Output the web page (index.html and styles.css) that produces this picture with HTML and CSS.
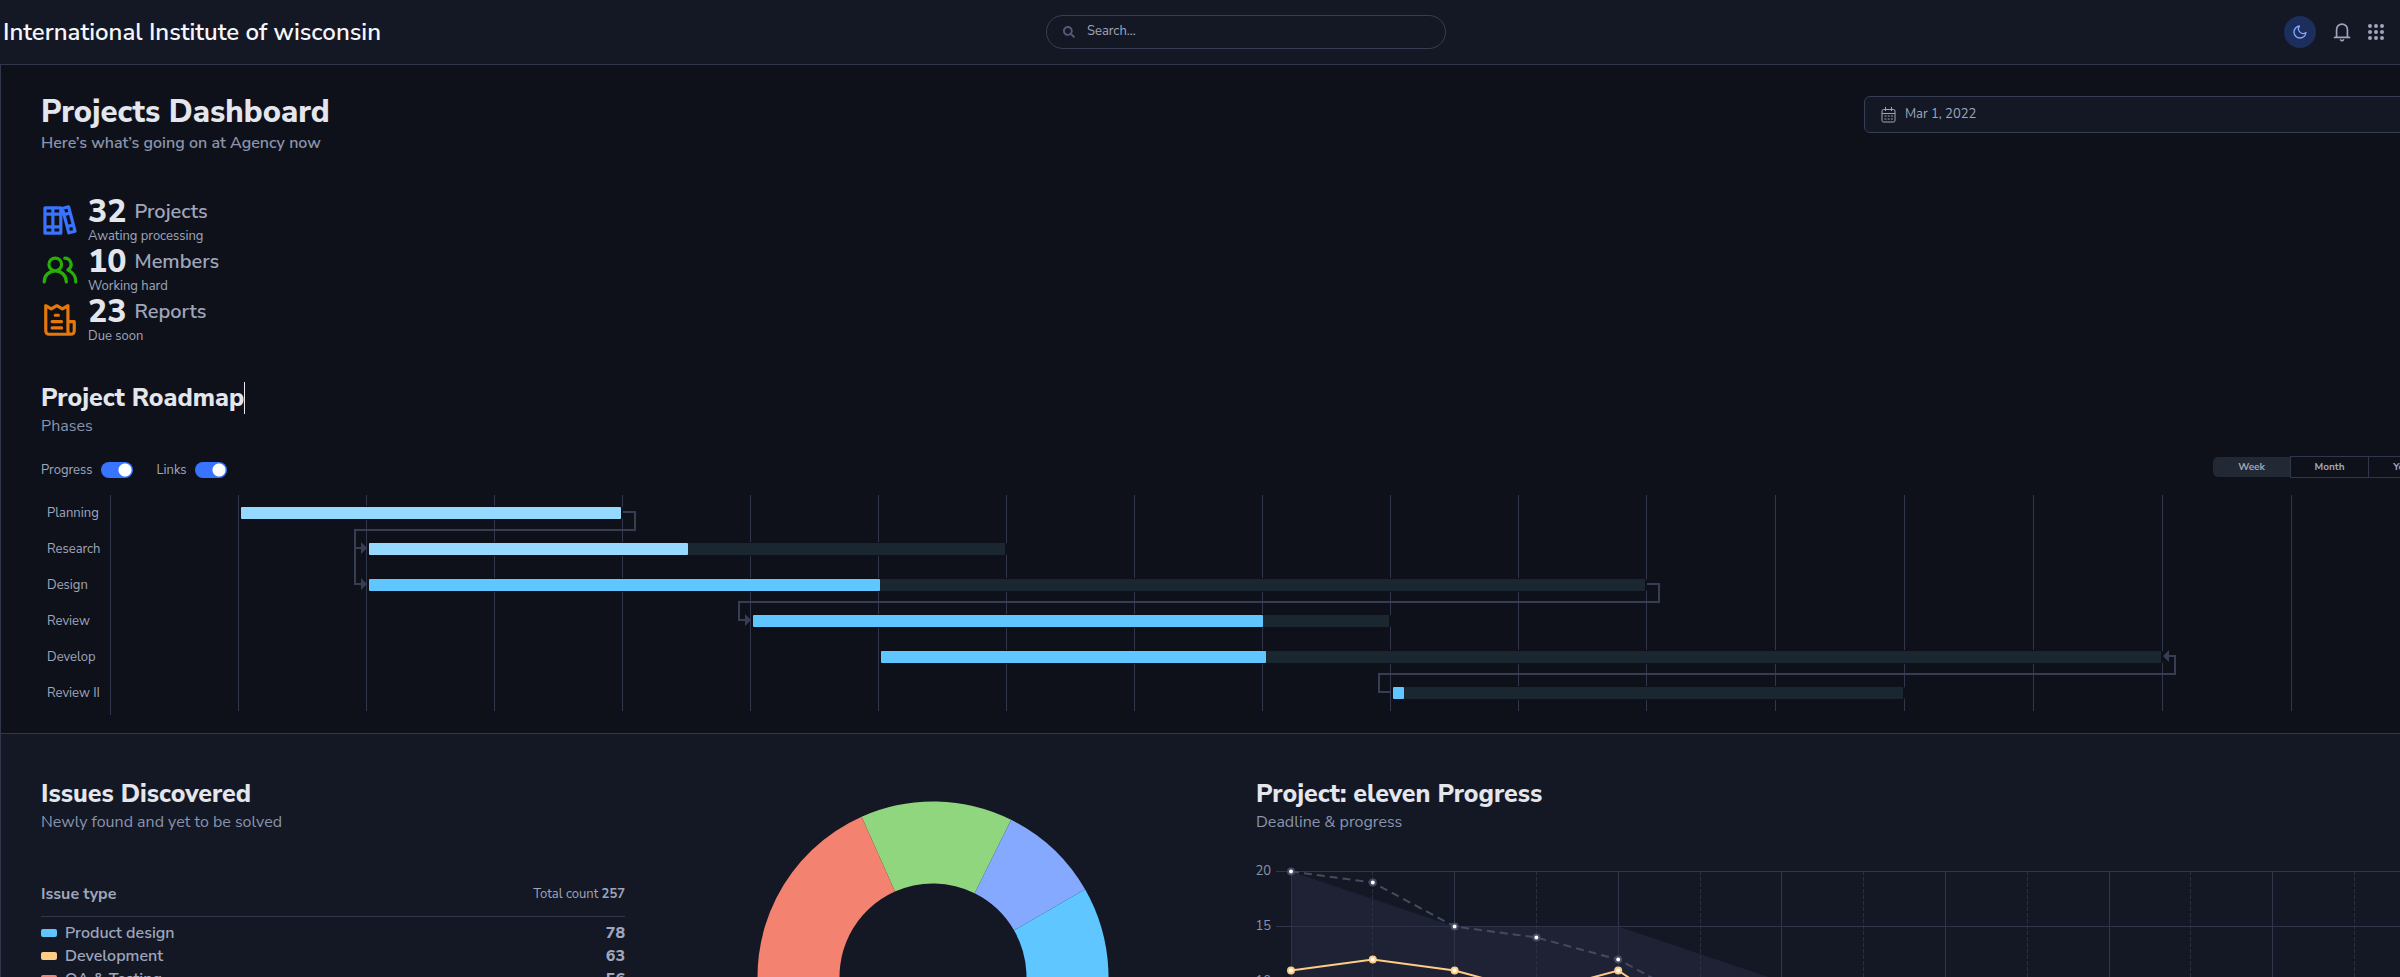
FILE: index.html
```
<!DOCTYPE html>
<html lang="en">
<head>
<meta charset="utf-8">
<title>Projects Dashboard</title>
<link rel="stylesheet" href="styles.css">
</head>
<body>
<header class="topbar">
  <a class="brand" href="#">International Institute of wisconsin</a>
  <form class="search" role="search">
    <svg class="search-icon" viewBox="0 0 512 512" aria-hidden="true"><path fill="currentColor" d="M505 442.700 405.300 343c-4.500-4.500-10.600-7-17-7H372c27.600-35.300 44-79.700 44-128C416 93.100 322.900 0 208 0S0 93.100 0 208s93.100 208 208 208c48.300 0 92.700-16.400 128-44v16.300c0 6.400 2.500 12.500 7 17l99.700 99.700c9.400 9.400 24.600 9.400 33.900 0l28.300-28.300c9.400-9.400 9.400-24.600.1-34zM208 336c-70.700 0-128-57.200-128-128 0-70.700 57.200-128 128-128 70.700 0 128 57.200 128 128 0 70.700-57.200 128-128 128z"/></svg>
    <input class="search-input" type="search" placeholder="Search..." aria-label="Search">
  </form>
  <nav class="actions">
    <button class="icon-btn theme-btn" type="button" aria-label="Switch theme">
      <svg width="16" height="16" viewBox="0 0 24 24" fill="none" stroke="currentColor" stroke-width="2" stroke-linecap="round" stroke-linejoin="round"><path d="M21 12.800A9 9 0 1 1 11.200 3 7 7 0 0 0 21 12.800z"/></svg>
    </button>
    <button class="icon-btn bell-btn" type="button" aria-label="Notifications">
      <svg width="20" height="20" viewBox="0 0 24 24" fill="none" stroke="currentColor" stroke-width="2" stroke-linecap="round" stroke-linejoin="round"><path d="M18.500 17.500V9a6.500 6.500 0 0 0-13 0v8.500L3 18.500h18z"/><path d="M13.730 21.500a2 2 0 0 1-3.460 0"/></svg>
    </button>
    <button class="icon-btn" type="button" aria-label="Apps">
      <svg width="16" height="16" viewBox="0 0 16 16" fill="currentColor"><circle cx="2" cy="2" r="2"/><circle cx="8" cy="2" r="2"/><circle cx="14" cy="2" r="2"/><circle cx="2" cy="8" r="2"/><circle cx="8" cy="8" r="2"/><circle cx="14" cy="8" r="2"/><circle cx="2" cy="14" r="2"/><circle cx="8" cy="14" r="2"/><circle cx="14" cy="14" r="2"/></svg>
    </button>
  </nav>
</header>

<main class="content">
  <section class="overview">
    <div class="page-head">
      <div>
        <h1 class="page-title">Projects Dashboard</h1>
        <p class="subtitle strong">Here’s what’s going on at Agency now</p>
      </div>
      <label class="date-field">
        <svg width="15" height="16" viewBox="0 0 15 16" fill="none" stroke="currentColor" aria-hidden="true"><rect x="1" y="2.500" width="13" height="12.500" rx="1.500"/><path d="M1 6.500h13M4.500 0v4M10.500 0v4"/><path d="M3.500 9h8.500M3.500 12h8.500" stroke-dasharray="2 1.200"/></svg>
        <input class="date-input" type="text" value="Mar 1, 2022" aria-label="Date">
      </label>
    </div>

    <ul class="stats">
      <li class="stat">
        <svg class="stat-icon blue" viewBox="0 0 24 24" fill="none" stroke="currentColor" stroke-width="2" stroke-linejoin="round" aria-hidden="true"><path d="M2.500 4.330h10v16h-10zM7.500 4.330v16M2.500 8.330h10M2.500 16.330h10M13.500 4.700l3.900-1.050 4.100 15.400-3.900 1.050zM14.500 8.600l3.900-1.050M16.600 16.200l3.900-1.050"/></svg>
        <div>
          <p class="stat-line"><strong class="stat-value">32</strong><span class="stat-name">Projects</span></p>
          <p class="stat-note">Awating processing</p>
        </div>
      </li>
      <li class="stat">
        <svg class="stat-icon green" viewBox="0 0 24 24" aria-hidden="true"><path fill="currentColor" d="M12.300 12.220A4.920 4.920 0 0 0 14 8.500a5 5 0 0 0-10 0 4.920 4.920 0 0 0 1.700 3.720A8 8 0 0 0 1 19.500a1 1 0 0 0 2 0 6 6 0 0 1 12 0 1 1 0 0 0 2 0 8 8 0 0 0-4.700-7.280zM9 11.500a3 3 0 1 1 3-3 3 3 0 0 1-3 3zm9.740.320A5 5 0 0 0 15 3.500a1 1 0 0 0 0 2 3 3 0 0 1 3 3 3 3 0 0 1-1.500 2.590 1 1 0 0 0-.500.840 1 1 0 0 0 .450.860l.390.260.130.070a7 7 0 0 1 4 6.380 1 1 0 0 0 2 0 9 9 0 0 0-4.230-7.680z"/></svg>
        <div>
          <p class="stat-line"><strong class="stat-value">10</strong><span class="stat-name">Members</span></p>
          <p class="stat-note">Working hard</p>
        </div>
      </li>
      <li class="stat">
        <svg class="stat-icon orange" viewBox="0 0 24 24" aria-hidden="true"><path fill="currentColor" d="M13 16H7a1 1 0 0 0 0 2h6a1 1 0 0 0 0-2zM9 10h2a1 1 0 0 0 0-2H9a1 1 0 0 0 0 2zm12 2h-3V3a1 1 0 0 0-.500-.870 1 1 0 0 0-1 0l-3 1.720-3-1.720a1 1 0 0 0-1 0l-3 1.720-3-1.720a1 1 0 0 0-1 0A1 1 0 0 0 2 3v16a3 3 0 0 0 3 3h14a3 3 0 0 0 3-3v-6a1 1 0 0 0-1-1zM5 20a1 1 0 0 1-1-1V4.730l2 1.140a1.080 1.080 0 0 0 1 0l3-1.720 3 1.720a1.080 1.080 0 0 0 1 0l2-1.140V19a3 3 0 0 0 .180 1zm15-1a1 1 0 0 1-2 0v-5h2zM13 12H7a1 1 0 0 0 0 2h6a1 1 0 0 0 0-2z"/></svg>
        <div>
          <p class="stat-line"><strong class="stat-value">23</strong><span class="stat-name">Reports</span></p>
          <p class="stat-note">Due soon</p>
        </div>
      </li>
    </ul>

    <h2 class="section-title"><span class="caret">Project Roadmap</span></h2>
    <p class="subtitle">Phases</p>

    <div class="toolbar">
      <label class="switch">Progress <input class="toggle" type="checkbox" checked></label>
      <label class="switch">Links <input class="toggle" type="checkbox" checked></label>
      <div class="range">
        <button class="range-btn active" type="button">Week</button>
        <button class="range-btn" type="button">Month</button>
        <button class="range-btn" type="button">Yearly</button>
      </div>
    </div>

    <svg class="gantt" viewBox="0 0 2382 220" role="img" aria-label="Project roadmap">
      <g id="gantt-grid" class="grid"></g>
      <g id="gantt-bars"></g>
      <g class="links">
        <path d="M582 17H594V35H314V89H322M314 53H322"/>
        <path d="M1606 89H1618V107H698V125H706"/>
        <path d="M1350 197H1338V179H2134V161H2127"/>
      </g>
      <path class="arrow" d="M320 47l6 6-6 6zM320 83l6 6-6 6zM704 119l6 6-6 6zM2128 155l-6 6 6 6z"/>
      <g id="gantt-labels" class="gantt-label"></g>
    </svg>
  </section>

  <section class="details">
    <div class="issues">
      <div class="issue-list">
        <h2 class="section-title">Issues Discovered</h2>
        <p class="subtitle">Newly found and yet to be solved</p>
        <table class="issue-table">
          <thead><tr><th scope="col">Issue type</th><th class="total" scope="col">Total count <b>257</b></th></tr></thead>
          <tbody>
            <tr><td><i class="swatch sky"></i>Product design</td><td class="count">78</td></tr>
            <tr><td><i class="swatch sand"></i>Development</td><td class="count">63</td></tr>
            <tr><td><i class="swatch coral"></i>QA &amp; Testing</td><td class="count">56</td></tr>
          </tbody>
        </table>
      </div>
      <svg class="donut" viewBox="0 0 352 352" role="img" aria-label="Issues by type"></svg>
    </div>
    <div class="progress">
      <h2 class="section-title">Project: eleven Progress</h2>
      <p class="subtitle">Deadline &amp; progress</p>
      <svg class="line-chart" viewBox="0 0 1167 260" role="img" aria-label="Deadline and progress"></svg>
    </div>
  </section>
</main>
<script src="charts.js"></script>
</body>
</html>
```
FILE: charts.js
```
const NS = 'http://www.w3.org/2000/svg';

function add(parent, name, attrs, text) {
  const el = document.createElementNS(NS, name);
  for (const key in attrs) el.setAttribute(key, attrs[key]);
  if (text !== undefined) el.textContent = text;
  parent.appendChild(el);
  return el;
}

/* Roadmap: start and end are in grid columns, done is a share of the span.
   Columns after the twelfth are one unit wider. */
const column = i => 69 + i * 128 + Math.max(0, i - 12);
const phases = [
  ['Planning', 1, 4, 1, '#96d9ff'],
  ['Research', 2, 7, 0.5, '#96d9ff'],
  ['Design', 2, 12, 0.4, '#60c6ff'],
  ['Review', 5, 10, 0.8, '#60c6ff'],
  ['Develop', 6, 16, 0.3, '#60c6ff'],
  ['Review II', 10, 14, 0.02, '#60c6ff']
];
const grid = document.getElementById('gantt-grid');
const bars = document.getElementById('gantt-bars');
const labels = document.getElementById('gantt-labels');
for (let i = 0; i <= 18; i++) {
  const x = column(i) + 0.5;
  add(grid, 'line', { x1: x, x2: x, y1: 0, y2: i ? 216 : 220 });
}
phases.forEach(([name, start, end, done, color], row) => {
  const x = column(start) + 3;
  const width = column(end) - 1 - x;
  const y = row * 36 + 12;
  const filled = Math.min(width, Math.max(10, Math.round(width * done) + 1));
  add(bars, 'rect', { x: x - 2, y: y - 1, width: width + 4, height: 14, rx: 3, fill: '#0f111a' });
  add(bars, 'rect', { x, y, width, height: 12, fill: '#1a2630' });
  add(bars, 'rect', { x, y, width: filled, height: 12, rx: 1, fill: color });
  add(labels, 'text', { x: 6, y: y + 10 }, name);
});

/* Issues donut */
const donut = document.querySelector('.donut');
const issues = [[36, '#90d67f'], [24, '#85a9ff'], [78, '#60c6ff'], [63, '#ffcc85'], [56, '#f48270']];
const point = (r, a) => (176 + r * Math.sin(a)).toFixed(2) + ' ' + (176 - r * Math.cos(a)).toFixed(2);
let angle = -24 * Math.PI / 180;
issues.forEach(([count, fill]) => {
  const next = angle + count / 257 * 2 * Math.PI;
  add(donut, 'path', {
    fill,
    d: `M${point(175.5, angle)}A175.5 175.5 0 0 1 ${point(175.5, next)}L${point(93.5, next)}A93.5 93.5 0 0 0 ${point(93.5, angle)}Z`
  });
  angle = next;
});

/* Deadline chart */
const chart = document.querySelector('.line-chart');
const px = i => 35 + i * 81.8;
const py = v => 10.5 + (20 - v) * 11;
const poly = data => data.map((v, i) => `${px(i).toFixed(1)},${py(v)}`).join(' ');
for (let i = 0; i <= 14; i++) {
  const x = Math.floor(px(i)) + 0.5;
  add(chart, 'line', { class: i % 2 ? 'tick minor' : 'tick', x1: x, x2: x, y1: 10, y2: 231 });
}
[20, 15, 10, 5, 0].forEach(v => {
  add(chart, 'line', { class: 'tick', x1: 20, x2: 1182, y1: py(v), y2: py(v) });
  add(chart, 'text', { class: 'axis', x: 15, y: py(v) + 3 }, v);
});
add(chart, 'polygon', {
  class: 'area',
  points: [[0, 20], [2, 15], [4, 15], [6, 10], [8, 7], [8, 0], [0, 0]].map(([i, v]) => `${px(i)},${py(v)}`).join(' ')
});
const series = [['target', [20, 19, 15, 14, 12, 8, 8, 5, 0], 3], ['actual', [11, 12, 11, 9, 11, 6, 5, 4, 3], 3]];
series.forEach(([name, data, r]) => {
  add(chart, 'polyline', { class: name, points: poly(data) });
  data.forEach((v, i) => add(chart, 'circle', { class: name + '-dot', cx: px(i), cy: py(v), r }));
});
```
FILE: styles.css
```
* { box-sizing: border-box; }

body {
  margin: 0;
  height: 100vh;
  overflow: hidden;
  background: #141824;
  color: #9fa6bc;
  font: 16px/24px "Nunito Sans", Lato, "Open Sans", sans-serif;
}

h1, h2, p, ul { margin: 0; padding: 0; }
button, input { font: inherit; color: inherit; }

.topbar {
  display: grid;
  grid-template-columns: 1043fr 400px 938fr;
  align-items: center;
  height: 65px;
  padding: 0 16px 0 3px;
  border-bottom: 1px solid #31374a;
  background: #141824;
}
.brand {
  color: #f5f7fa;
  font-size: 24px;
  font-weight: 600;
  line-height: 32px;
  text-decoration: none;
}
.search {
  display: flex;
  align-items: center;
  height: 34px;
  padding: 0 16px;
  border: 1px solid #373e53;
  border-radius: 17px;
}
.search-icon { width: 12px; height: 12px; color: #525b75; }
.search-input {
  flex: 1;
  min-width: 0;
  padding: 0 0 2px 12px;
  border: 0;
  outline: 0;
  background: none;
  font-size: 13px;
  line-height: 20px;
}
.search-input::placeholder { color: #9fa6bc; opacity: 1; }
.actions { display: flex; align-items: center; justify-content: flex-end; gap: 16px; }
.icon-btn {
  display: flex;
  align-items: center;
  justify-content: center;
  padding: 0;
  border: 0;
  background: none;
}
.theme-btn {
  width: 32px;
  height: 32px;
  border-radius: 50%;
  background: #1c2e5c;
  color: #85a9ff;
}

/* The grid runs past the right edge of the window */
.content {
  width: calc(100% + 63px);
  border-left: 1px solid #31374a;
}
.overview {
  padding: 30px 40px 18px;
  border-bottom: 1px solid #31374a;
  background: #0f111a;
}
.page-head {
  display: flex;
  justify-content: space-between;
  align-items: flex-start;
}
.page-title {
  margin-bottom: 2px;
  color: #e3e6ed;
  font-size: 31px;
  font-weight: 800;
  line-height: 34px;
}
.subtitle { color: #8a94ad; }
.strong { font-weight: 600; }
.date-field {
  display: flex;
  align-items: center;
  gap: 9px;
  width: 559px;
  height: 37px;
  margin-top: 1px;
  padding: 0 16px;
  border: 1px solid #373e53;
  border-radius: 6px;
  background: #141824;
}
.date-input {
  flex: 1;
  padding: 0 0 2px;
  border: 0;
  background: none;
  font-size: 13px;
  line-height: 20px;
}

.stats { padding: 40px 0 37px; list-style: none; }
.stat { display: flex; align-items: center; gap: 9px; height: 50px; }
.stat-icon { width: 38px; height: 38px; }
.blue { color: #3874ff; }
.green { color: #25b003; }
.orange { color: #e5780b; }
.stat-line { display: flex; align-items: center; gap: 8px; height: 33px; line-height: 33px; }
.stat-value { color: #e3e6ed; font-size: 32px; font-weight: 800; }
.stat-name { font-size: 20px; font-weight: 600; }
.stat-note { font-size: 13px; line-height: 17px; }

.section-title {
  color: #e3e6ed;
  font-size: 25px;
  font-weight: 800;
  line-height: 32px;
}
.caret { display: inline-block; border-right: 1px solid #e3e6ed; }

.toolbar {
  display: flex;
  align-items: center;
  gap: 24px;
  height: 28px;
  margin: 18px -24px 11px 0;
  font-size: 13px;
}
.switch { display: flex; align-items: center; gap: 8px; }
.toggle {
  appearance: none;
  width: 32px;
  height: 16px;
  margin: 0;
  border-radius: 8px;
  background: radial-gradient(circle at 24px 8px, #fff 6px, #3874ff 7px);
}
.range { display: flex; align-self: flex-start; margin-left: auto; }
.range-btn {
  width: 79px;
  height: 22px;
  margin-left: -1px;
  padding: 0;
  border: 1px solid #31374a;
  background: none;
  font-size: 10px;
  font-weight: 700;
  line-height: 20px;
}
.range-btn.active {
  border-color: transparent;
  border-radius: 6px 0 0 6px;
  background: #222834;
  background-clip: padding-box;
}
.range-btn:last-child { border-radius: 0 6px 6px 0; }

.gantt, .line-chart, .donut { display: block; width: 100%; overflow: visible; }
.grid line { stroke: #31374a; }
.links path { fill: none; stroke: #373e53; stroke-width: 2; }
.arrow { fill: #373e53; }
.gantt-label text { fill: #9fa6bc; font-size: 13px; }

.details {
  display: grid;
  grid-template-columns: 1fr 1fr;
  gap: 48px;
  padding: 44px 40px;
}
.issues {
  display: grid;
  grid-template-columns: 584fr 551fr;
  gap: 32px;
}
.issue-table {
  width: 100%;
  margin-top: 38px;
  border-collapse: collapse;
}
.issue-table th {
  height: 44px;
  padding: 0;
  border-bottom: 1px solid #31374a;
  text-align: left;
  vertical-align: middle;
}
.issue-table .total { font-size: 13px; font-weight: 400; text-align: right; }
.issue-table td { padding: 0; font-weight: 600; line-height: 23px; }
.issue-table tbody::before { content: ""; display: table-row; height: 6px; }
.issue-table .count { font-weight: 800; text-align: right; }
.swatch {
  display: inline-block;
  width: 16px;
  height: 8px;
  margin-right: 8px;
  border-radius: 2px;
  vertical-align: 1px;
}
.sky { background: #60c6ff; }
.sand { background: #ffcc85; }
.coral { background: #f48270; }
.donut { width: 352px; margin: 23px auto 0; }

.line-chart { margin-top: 27px; }
.tick { stroke: #31374a; }
.tick.minor { stroke: #2a3040; stroke-dasharray: 4 2; }
.axis { fill: #8a94ad; font-size: 13px; text-anchor: end; }
.area { fill: #2a2f4a; fill-opacity: 0.45; }
.target { fill: none; stroke: #434b63; stroke-width: 2; stroke-dasharray: 8 5; }
.actual { fill: none; stroke: #ffcc85; stroke-width: 2; }
.target-dot { fill: #fff; stroke: #434b63; stroke-width: 2; }
.actual-dot { fill: #fff; stroke: #ffcc85; stroke-width: 2; }
```
